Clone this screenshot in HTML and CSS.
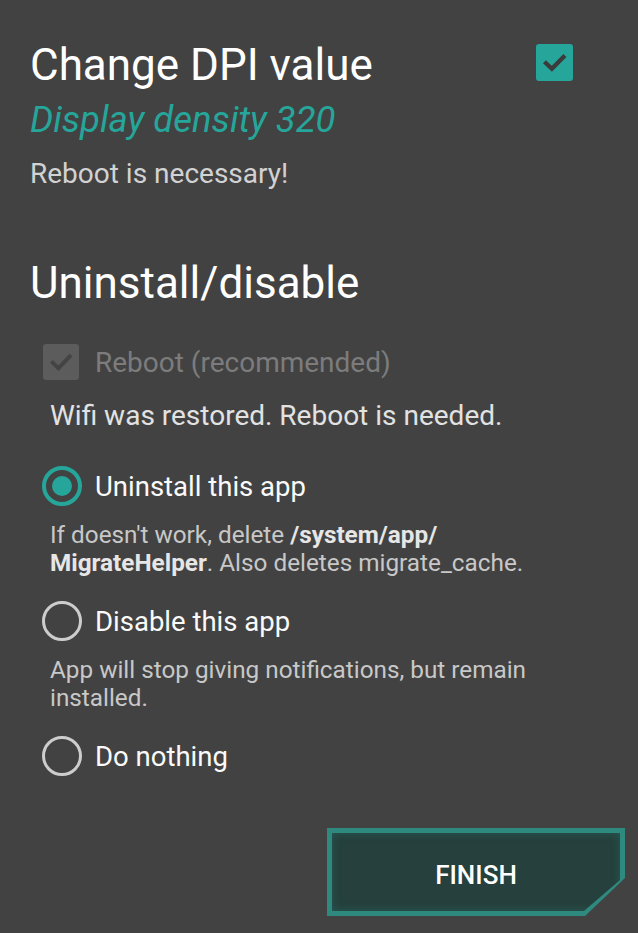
FILE: index.html
```html
<!DOCTYPE html>
<html>
<head>
<meta charset="utf-8">
<link rel="stylesheet" href="styles.css">
</head>
<body>
<div class="page">
  <div class="header">
    <h1 class="title">Change DPI value</h1>
    <span class="checkbox checked">
      <svg viewBox="0 0 24 24" width="37" height="37"><path d="M6.5 12.5l3.8 3.6L17.8 8.4" fill="none" stroke="#3b3b3b" stroke-width="2.8" stroke-linecap="square"/></svg>
    </span>
  </div>
  <div class="subtitle">Display density 320</div>
  <div class="note">Reboot is necessary!</div>

  <h2 class="section">Uninstall/disable</h2>

  <div class="check-row">
    <span class="checkbox disabled">
      <svg viewBox="0 0 24 24" width="36" height="36"><path d="M6.5 12.5l3.8 3.6L17.8 8.4" fill="none" stroke="#444" stroke-width="2.6" stroke-linecap="square"/></svg>
    </span>
    <span class="check-label">Reboot (recommended)</span>
  </div>
  <div class="info">Wifi was restored. Reboot is needed.</div>

  <div class="radio-row first">
    <span class="radio on"><span class="dot"></span></span>
    <span class="radio-label">Uninstall this app</span>
  </div>
  <div class="desc">If doesn't work, delete <b>/system/app/<br>MigrateHelper</b>. Also deletes migrate_cache.</div>

  <div class="radio-row">
    <span class="radio"></span>
    <span class="radio-label">Disable this app</span>
  </div>
  <div class="desc">App will stop giving notifications, but remain<br>installed.</div>

  <div class="radio-row">
    <span class="radio"></span>
    <span class="radio-label">Do nothing</span>
  </div>

  <div class="actions">
    <div class="finish"><div class="finish-inner">FINISH</div></div>
  </div>
</div>
</body>
</html>
```
FILE: styles.css
```css
html, body {
  margin: 0;
  padding: 0;
  background: #424242;
}
body {
  font-family: Roboto, "Noto Sans", sans-serif;
  color: #fff;
  width: 638px;
  height: 933px;
  overflow: hidden;
}
.page {
  padding: 39px 0 0 30px;
  display: flex;
  flex-direction: column;
}
.header {
  display: flex;
  justify-content: space-between;
  align-items: flex-start;
  padding-right: 65px;
}
.title, .section {
  margin: 0;
  font-size: 44px;
  font-weight: 400;
  line-height: 52px;
  color: #fff;
}
.checkbox {
  display: flex;
  border-radius: 3px;
}
.checkbox.checked {
  background: #26a69a;
  width: 37px;
  height: 37px;
  margin-top: 5px;
}
.checkbox.disabled {
  background: #5c5c5c;
  width: 36px;
  height: 36px;
}
.subtitle {
  margin-top: 7px;
  font-size: 36.5px;
  line-height: 44px;
  font-style: italic;
  color: #26a69a;
}
.note {
  margin-top: 15px;
  font-size: 28px;
  line-height: 34px;
  color: #d2d2d2;
}
.section {
  margin-top: 66px;
}
.check-row {
  margin-top: 34px;
  margin-left: 13px;
  display: flex;
  align-items: center;
  gap: 16px;
}
.check-label {
  font-size: 28px;
  line-height: 36px;
  padding-top: 2px;
  color: #7c7c7c;
}
.info {
  margin-top: 18px;
  margin-left: 20px;
  font-size: 28px;
  line-height: 34px;
  color: #e2e2e2;
}
.radio-row {
  margin-left: 12px;
  margin-top: 23px;
  display: flex;
  align-items: center;
  gap: 13px;
}
.radio-row.first {
  margin-top: 32px;
}
.radio {
  box-sizing: border-box;
  width: 40px;
  height: 40px;
  border-radius: 50%;
  border: 3px solid #cdcdcd;
  display: flex;
  align-items: center;
  justify-content: center;
}
.radio.on {
  border: 4px solid #26a69a;
}
.radio .dot {
  width: 20px;
  height: 20px;
  border-radius: 50%;
  background: #26a69a;
}
.radio-label {
  font-size: 27.5px;
  line-height: 40px;
  padding-top: 2px;
  color: #fafafa;
}
.desc {
  margin-top: 14px;
  margin-left: 20px;
  font-size: 24.3px;
  line-height: 28px;
  color: #c8c8c8;
}
.desc b {
  font-weight: 700;
  color: #e6e6e6;
}
.actions {
  display: flex;
  justify-content: flex-end;
  padding-right: 13px;
  margin-top: 51px;
}
.finish {
  width: 298px;
  height: 88px;
  box-sizing: border-box;
  padding: 5px;
  background: #2e8a7e;
  clip-path: polygon(0 0, 100% 0, 100% 50px, calc(100% - 40px) 100%, 0 100%);
  display: flex;
}
.finish-inner {
  flex: 1;
  background: #25403d;
  box-shadow: inset 0 0 8px rgba(46, 138, 126, 0.35);
  clip-path: polygon(0 0, 100% 0, 100% 47px, calc(100% - 36px) 100%, 0 100%);
  display: flex;
  align-items: center;
  justify-content: center;
  font-size: 26px;
  font-weight: 500;
  color: #fff;
  padding-top: 6px;
  box-sizing: border-box;
}
```
